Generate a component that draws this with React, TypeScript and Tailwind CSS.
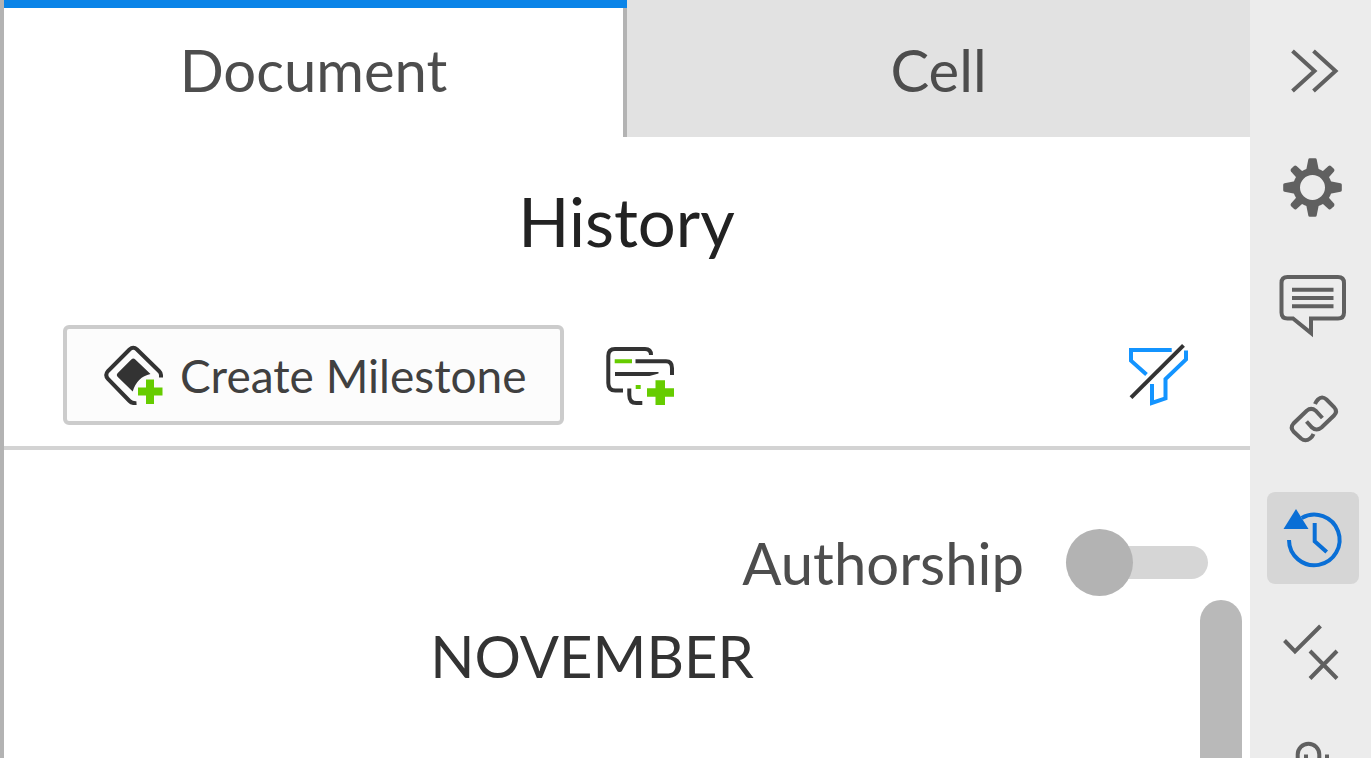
import { useState } from 'react';
import type { ReactNode } from 'react';
import { clsx } from 'clsx';

interface RailItem {
  id: string;
  label: string;
  icon: ReactNode;
}

const wideTeeth = [0, 90, 180, 270];
const narrowTeeth = [45, 135, 225, 315];

const railItems: RailItem[] = [
  {
    id: 'collapse',
    label: 'Collapse panel',
    icon: <path d="M25.500 27l22 20-22 20M46.500 27l22 20-22 20" />,
  },
  {
    id: 'settings',
    label: 'Settings',
    icon: (
      <g fill="currentColor" stroke="none">
        {wideTeeth.map((angle) => (
          <path
            key={angle}
            d="M39 30l2.300-11.500q.2-1.300 1.500-1.300h5.400q1.300 0 1.500 1.300L52 30z"
            transform={`rotate(${angle} 45.5 46.5)`}
          />
        ))}
        {narrowTeeth.map((angle) => (
          <path
            key={angle}
            d="M41 30l.6-10q.2-1.800 2-1.800h3.800q1.800 0 2 1.800L50 30z"
            transform={`rotate(${angle} 45.5 46.5)`}
          />
        ))}
        <path
          fillRule="evenodd"
          d="M45.500 27a19.500 19.500 0 1 0 0 39a19.500 19.500 0 1 0 0-39zM45.500 34a12.500 12.500 0 1 1 0 25a12.500 12.500 0 1 1 0-25z"
        />
      </g>
    ),
  },
  {
    id: 'comments',
    label: 'Comments',
    icon: (
      <path d="M44 60.500H71q6 0 6-6V25q0-6-6-6H20.500q-6 0-6 6v29.500q0 6 6 6H26L44 75zM25 31.700H66.500M25 40H66.500M25 48.300H66.500" />
    ),
  },
  {
    id: 'links',
    label: 'Links',
    icon: (
      <path d="M48 29q1-2.500 3-4.500q4-4 8.500 0L67 32q4 4.500 0 8.500L54.500 52.500q-5 4-9.500 0l-5.500-6M46.500 59q-1 2.500-3.500 4.500q-4.500 3.500-9 0L26.500 56.500q-3.500-4 0-8L39.700 35.700q4.500-3.700 9 0l6.700 7.300" />
    ),
  },
  {
    id: 'history',
    label: 'History',
    icon: (
      <>
        <path d="M22 48A25.300 25.300 0 1 0 34.700 26M47.700 31v18.300l12 10.700" />
        <path d="M29 17L41.500 37h-25z" fill="currentColor" stroke="none" />
      </>
    ),
  },
  {
    id: 'validation',
    label: 'Validation',
    icon: <path d="M17.500 31.500L28 42.500L53.500 17M43 42l27 27.500M70 42L43 69.500" />,
  },
  {
    id: 'permissions',
    label: 'Permissions',
    icon: <path d="M30.700 60V28.500a10.800 10.800 0 0 1 21.600 0V60M39 28.500V60M60 28.500V60" />,
  },
];

function MilestoneIcon() {
  return (
    <svg className="h-[60px] w-[60px] shrink-0" viewBox="0 0 60 60" fill="none" aria-hidden="true">
      <path
        d="M57 32.500V30q0-2-2-4L33 4.500q-3.700-3.500-7.500 0L4 26q-3.500 4 0 8L25.500 56q2.500 2.500 7 2.200"
        stroke="#333"
        strokeWidth="4"
      />
      <path d="M27.300 14.500q2-2 4 0L46.500 29Q33 32 28.700 46.500L13.800 32q-2-2 0-4z" fill="#333" />
      <path d="M42 34.500h8v8h8.500v8H50v8.500h-8v-8.500h-8v-8h8z" fill="#6c0" />
    </svg>
  );
}

function CommentsAddIcon() {
  return (
    <svg className="h-16 w-[72px]" viewBox="0 0 72 64" fill="none" strokeWidth="4" aria-hidden="true">
      <path
        d="M46 12q0-6-6-6H10q-6.700 0-6.700 7v27q0 7.500 7 7.500H18M30.500 18.300H61q6 0 6 7V32M24.300 45.500V52q0 8 7 8h6"
        stroke="#333"
      />
      <path d="M10 29H53.500v1.500l-9 2.500H10z" fill="#333" />
      <path d="M9.700 18.300H27M30.700 44h5" stroke="#6c0" />
      <path d="M50.500 37.300H60v8h9v8.500h-9V62h-9.500v-8.200h-8.500v-8.500h8.500z" fill="#6c0" />
    </svg>
  );
}

function FilterOffIcon() {
  return (
    <svg className="h-16 w-[62px]" viewBox="0 0 62 64" fill="none" strokeWidth="4" aria-hidden="true">
      <path
        d="M43.700 7H3v10.700L18.500 31.500M58 7.500v9L37.500 36v19.300L24 60V41"
        stroke="#1394ff"
      />
      <path d="M3 54.700L55.500 2.300" stroke="#333" />
    </svg>
  );
}

function HistoryPanel() {
  const [authorship, setAuthorship] = useState(false);

  return (
    <section className="flex min-h-0 flex-1 flex-col">
      <header className="border-b-4 border-[#d3d3d3] pt-11 pb-[21px] pl-[59px] pr-[60px]">
        <h1 className="text-center text-[67px] leading-20 text-[#222]">History</h1>
        <div className="mt-16 flex items-center">
          <button
            type="button"
            className="flex h-25 items-center gap-4 rounded-md border-4 border-[#ccc] bg-[#fcfcfc] pl-[37px] pr-[33px] text-[46px] text-[#404040]"
          >
            <MilestoneIcon />
            Create Milestone
          </button>
          <button type="button" className="ml-[41px]" aria-label="Add comment milestone">
            <CommentsAddIcon />
          </button>
          <button type="button" className="ml-auto" aria-label="Clear filter">
            <FilterOffIcon />
          </button>
        </div>
      </header>

      <div className="mt-[79px] mr-[42px] flex h-[67px] justify-end gap-[42px]">
        <label htmlFor="authorship" className="h-[63px] overflow-hidden text-[58px] leading-17 text-[#4d4d4d]">
          Authorship
        </label>
        <input
          id="authorship"
          type="checkbox"
          role="switch"
          checked={authorship}
          onChange={(e) => setAuthorship(e.target.checked)}
          className="relative h-[67px] w-[142px] appearance-none before:absolute before:inset-x-0 before:top-[17px] before:h-[33px] before:rounded-full before:bg-[#d6d6d6] after:absolute after:left-0 after:top-0 after:h-[67px] after:w-[67px] after:rounded-full after:bg-[#b3b3b3] checked:after:left-auto checked:after:right-0"
        />
      </div>

      <div className="mt-1 flex min-h-0 flex-1">
        <h2 className="flex-1 pt-5 pr-5 text-center text-[58px] leading-18 text-[#333]">NOVEMBER</h2>
        <div className="mr-2 w-[42px] rounded-t-full bg-[#b9b9b9]" />
      </div>
    </section>
  );
}

export default function App() {
  const [tab, setTab] = useState('Document');
  const [tool, setTool] = useState('history');

  return (
    <div className="flex h-screen overflow-hidden bg-white font-['Lato',sans-serif]">
      <main className="flex min-w-0 flex-1 flex-col border-l-4 border-[#b3b3b3]">
        <div role="tablist" className="flex h-[137px] shrink-0">
          {['Document', 'Cell'].map((name) => (
            <button
              key={name}
              type="button"
              role="tab"
              aria-selected={tab === name}
              onClick={() => setTab(name)}
              className={clsx(
                'flex flex-1 flex-col text-[58px] leading-17 text-[#4d4d4d]',
                tab === name ? 'bg-white' : 'bg-[#e2e2e2]'
              )}
            >
              <span className={clsx('h-2 w-full', tab === name && 'bg-[#0a84e8]')} />
              <span
                className={clsx(
                  'w-full flex-1 border-[#b3b3b3] pt-7',
                  tab === name && 'border-r-4'
                )}
              >
                {name}
              </span>
            </button>
          ))}
        </div>
        <HistoryPanel />
      </main>

      <nav aria-label="Tools" className="flex w-[121px] shrink-0 flex-col items-center gap-[25px] bg-[#ececec] pt-6 pl-1">
        {railItems.map((item) => (
          <button
            key={item.id}
            type="button"
            aria-label={item.label}
            onClick={() => setTool(item.id)}
            className={clsx(
              'h-[92px] w-[92px] shrink-0 rounded-lg',
              tool === item.id ? 'bg-[#d6d6d6] text-[#0a6fd6]' : 'text-[#606060]'
            )}
          >
            <svg viewBox="0 0 92 92" fill="none" stroke="currentColor" strokeWidth="4" aria-hidden="true">
              {item.icon}
            </svg>
          </button>
        ))}
      </nav>
    </div>
  );
}
